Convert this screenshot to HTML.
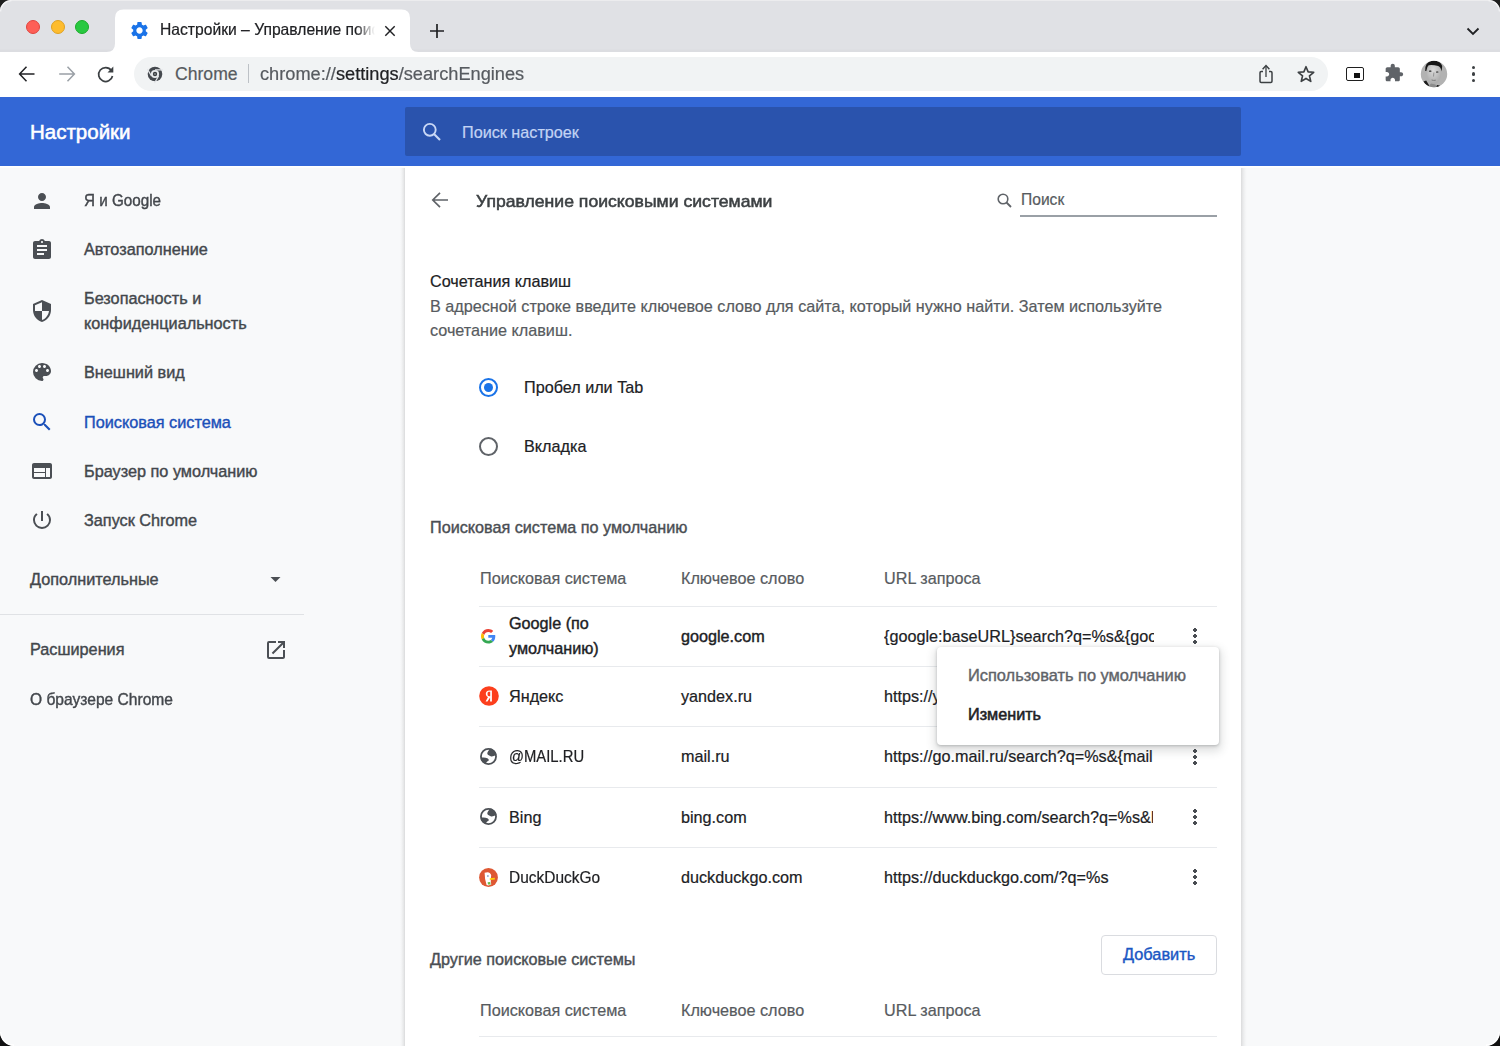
<!DOCTYPE html>
<html><head><meta charset="utf-8">
<style>
*{box-sizing:border-box;margin:0;padding:0}
html,body{width:1500px;height:1046px;overflow:hidden;background:#f8f9fa;font-family:"Liberation Sans",sans-serif;position:relative}
.a{position:absolute;white-space:nowrap}
.t{position:absolute;white-space:nowrap;line-height:20px;height:20px;-webkit-text-stroke:0.2px currentColor}
.a{-webkit-text-stroke:0.2px currentColor}
.med{-webkit-text-stroke:0.4px currentColor}
svg{position:absolute;overflow:visible}
#tabstrip{position:absolute;left:0;top:0;width:1500px;height:52px;background:linear-gradient(180deg,#e0e1e5 0,#e0e1e5 49px,#dcdde1 50px,#dcdde1 52px)}
#toolbar{position:absolute;left:0;top:52px;width:1500px;height:45px;background:#fff}
#omni{position:absolute;left:133.5px;top:56.7px;width:1194px;height:34px;border-radius:17px;background:#f1f3f4}
#header{position:absolute;left:0;top:97px;width:1500px;height:69px;background:#3367d6}
#hsearch{position:absolute;left:405px;top:107px;width:836px;height:49px;background:#2a53ad;border-radius:2px}
#side{position:absolute;left:0;top:166px;width:405px;height:880px;background:#f8f9fa}
#card{position:absolute;left:405px;top:166px;width:836px;height:880px;background:#fff;box-shadow:none}
.side{font-size:16.25px;color:#43474c}
.p{color:#202124}
.s{color:#575b60}
.dots{position:absolute;width:4px;height:16px;background:radial-gradient(circle at 2px 2px,#484c51 1.7px,transparent 2.1px) 0 0/4px 6px repeat-y}
.hr{position:absolute;height:1px;background:#e8eaed}
</style></head><body>
<div id="tabstrip"></div>
<div class="a" style="left:0;top:0;width:1500px;height:1px;background:#ececee"></div>
<svg width="14" height="14" style="left:0;top:0"><path d="M0 0H11A11 11 0 0 0 0 11Z" fill="#1e1e1e"/><path d="M0.6 11.6A11 11 0 0 1 11.6 0.6" stroke="#f2f2f4" stroke-width="1.3" fill="none"/></svg>
<svg width="14" height="14" style="left:1486px;top:0"><path d="M14 0H3A11 11 0 0 1 14 11Z" fill="#1e1e1e"/><path d="M2.4 0.6A11 11 0 0 1 13.4 11.6" stroke="#f2f2f4" stroke-width="1.3" fill="none"/></svg>
<!-- traffic lights -->
<div class="a" style="left:26px;top:19.5px;width:14px;height:14px;border-radius:50%;background:#fe5f57;border:0.5px solid #e0443e"></div>
<div class="a" style="left:51px;top:19.5px;width:14px;height:14px;border-radius:50%;background:#febc2e;border:0.5px solid #dea123"></div>
<div class="a" style="left:75px;top:19.5px;width:14px;height:14px;border-radius:50%;background:#28c840;border:0.5px solid #1aab29"></div>
<!-- tab -->
<svg width="1500" height="52" style="left:0;top:0">
  <path d="M106.5 52 Q115 52 115 43.5 L115 18 Q115 9.5 123.5 9.5 L401.5 9.5 Q410 9.5 410 18 L410 43.5 Q410 52 418.5 52 Z" fill="#fff"/>
</svg>
<div id="toolbar"></div>
<svg width="21" height="21" style="left:129px;top:20px" viewBox="0 0 24 24"><path fill="#1a73e8" d="M19.14 12.94c.04-.3.06-.61.06-.94 0-.32-.02-.64-.07-.94l2.03-1.58a.49.49 0 0 0 .12-.61l-1.92-3.32a.488.488 0 0 0-.59-.22l-2.39.96c-.5-.38-1.03-.7-1.62-.94l-.36-2.54a.484.484 0 0 0-.48-.41h-3.84c-.24 0-.43.17-.47.41l-.36 2.54c-.59.24-1.13.57-1.62.94l-2.39-.96c-.22-.08-.47 0-.59.22L2.74 8.87c-.12.21-.08.47.12.61l2.03 1.58c-.05.3-.09.63-.09.94s.02.64.07.94l-2.03 1.58a.49.49 0 0 0-.12.61l1.92 3.32c.12.22.37.29.59.22l2.39-.96c.5.38 1.03.7 1.62.94l.36 2.54c.05.24.24.41.48.41h3.84c.24 0 .44-.17.47-.41l.36-2.54c.59-.24 1.13-.56 1.62-.94l2.39.96c.22.08.47 0 .59-.22l1.92-3.32c.12-.22.07-.47-.12-.61l-2.01-1.58zM12 15.6c-1.98 0-3.6-1.62-3.6-3.6s1.62-3.6 3.6-3.6 3.6 1.62 3.6 3.6-1.62 3.6-3.6 3.6z"/></svg>
<div class="t p" style="left:160px;top:20.2px;font-size:15.66px;width:216px;overflow:hidden;-webkit-mask-image:linear-gradient(90deg,#000 196px,transparent 215px)">Настройки – Управление поисковыми</div>
<svg width="12" height="12" style="left:384px;top:25px"><path d="M1.3 1.3L10.7 10.7M10.7 1.3L1.3 10.7" stroke="#202124" stroke-width="1.45"/></svg>
<svg width="16" height="16" style="left:429px;top:23px"><path d="M8 1V15M1 8H15" stroke="#202124" stroke-width="1.7"/></svg>
<svg width="14" height="10" style="left:1466px;top:26px"><path d="M1.5 2.5L7 8L12.5 2.5" stroke="#202124" stroke-width="1.8" fill="none"/></svg>
<!-- toolbar -->
<svg width="18" height="18" style="left:18px;top:64.5px"><path d="M16.5 9H2.2M8.5 1.8L1.6 9L8.5 16.2" stroke="#202124" stroke-width="1.5" fill="none"/></svg>
<svg width="18" height="18" style="left:57.5px;top:64.5px"><path d="M1.2 9H15.8M9.5 1.8L16.4 9L9.5 16.2" stroke="#9aa0a6" stroke-width="1.5" fill="none"/></svg>
<svg width="18" height="18" style="left:97px;top:64.5px"><path d="M14.3 5.4A7 7 0 1 0 15.5 11" stroke="#3c4043" stroke-width="1.7" fill="none"/><path d="M16.3 1.6V7.4H10.5Z" fill="#3c4043"/></svg>
<div id="omni"></div>
<svg width="16" height="16" style="left:147px;top:65.8px" viewBox="0 0 16 16"><circle cx="8" cy="8" r="7.3" fill="#45494e"/><circle cx="8" cy="8" r="4.1" fill="#e8eaed"/><circle cx="8" cy="8" r="2.2" fill="#3c4043"/><circle cx="8" cy="8" r="1.1" fill="#7a7e83"/><path d="M8 3.9H15.8M11.55 10.05L7.55 17M4.45 10.05L0.45 3.1" stroke="#e3e5e8" stroke-width="1.25"/></svg>
<div class="t s" style="left:175px;top:64px;font-size:17.6px">Chrome</div>
<div class="a" style="left:248px;top:64px;width:1px;height:19px;background:#bdc1c6"></div>
<div class="t s" style="left:260px;top:64px;font-size:17.6px;transform-origin:0 0;transform:scaleX(1.035)">chrome://<span style="color:#202124">settings</span>/searchEngines</div>
<svg width="16" height="20" style="left:1258px;top:64px"><path d="M5 7.5H3.2Q2 7.5 2 8.7V17.3Q2 18.5 3.2 18.5H12.8Q14 18.5 14 17.3V8.7Q14 7.5 12.8 7.5H11" stroke="#3c4043" stroke-width="1.5" fill="none"/><path d="M8 13V2" stroke="#3c4043" stroke-width="1.3"/><path d="M4.6 5.2L8 1.6L11.4 5.2" stroke="#3c4043" stroke-width="1.5" fill="none"/></svg>
<svg width="22" height="22" style="left:1294.9px;top:62.5px"><polygon points="11.00,3.70 13.14,8.85 18.70,9.30 14.47,12.93 15.76,18.35 11.00,15.45 6.24,18.35 7.53,12.93 3.30,9.30 8.86,8.85" fill="none" stroke="#3c4043" stroke-width="1.65" stroke-linejoin="round"/></svg>
<div class="a" style="left:1346px;top:66.5px;width:18px;height:14.5px;border:1.9px solid #1f1f1f;border-radius:2px"></div>
<div class="a" style="left:1354px;top:73px;width:6px;height:5px;background:#111"></div>
<svg width="20" height="20" style="left:1384px;top:63px" viewBox="0 0 24 24"><path fill="#5f6368" d="M20.5 11H19V7c0-1.1-.9-2-2-2h-4V3.5C13 2.12 11.88 1 10.5 1S8 2.12 8 3.5V5H4c-1.1 0-1.99.9-1.99 2v3.8H3.5c1.49 0 2.7 1.21 2.7 2.7s-1.21 2.7-2.7 2.7H2V20c0 1.1.9 2 2 2h3.8v-1.5c0-1.49 1.21-2.7 2.7-2.7 1.49 0 2.7 1.21 2.7 2.7V22H17c1.1 0 2-.9 2-2v-4h1.5c1.38 0 2.5-1.12 2.5-2.5S21.88 11 20.5 11z"/></svg>
<svg width="28" height="28" style="left:1419.5px;top:59.6px" viewBox="0 0 28 28"><defs><clipPath id="av"><circle cx="14" cy="14" r="13.2"/></clipPath><radialGradient id="fc" cx="0.45" cy="0.35" r="0.65"><stop offset="0" stop-color="#dadada"/><stop offset="1" stop-color="#ababab"/></radialGradient></defs><g clip-path="url(#av)"><rect width="28" height="28" fill="#b2b2b2"/><ellipse cx="14" cy="13.5" rx="7" ry="10.5" fill="url(#fc)"/><path d="M5.2 11Q4.6 2 12.5 0.8Q20.5 0.5 22.2 6L21.6 11.5Q20.8 6.8 18.2 6Q13 4.6 8.6 5.2Q6.6 6.8 6.3 11Z" fill="#161616"/><ellipse cx="10.2" cy="11.2" rx="1.3" ry="0.85" fill="#505050"/><ellipse cx="17.2" cy="12" rx="1.3" ry="0.85" fill="#505050"/><path d="M13.9 12.5L13.5 16.5" stroke="#8a8a8a" stroke-width="0.9"/><path d="M11.6 20Q13.6 20.8 15.8 20.2" stroke="#7d7d7d" stroke-width="1" fill="none"/><path d="M3.5 21.5L6.2 20.5L9.5 26L7 28Z" fill="#1c1c1c"/><path d="M15.8 28L17 25L20 25.8L19 28Z" fill="#111"/><path d="M8.5 26L11 23.5L15.5 24.5L17 28H9Z" fill="#8c8c8c"/></g></svg>
<div class="a" style="left:1471.5px;top:66px;width:3.2px;height:3.2px;border-radius:50%;background:#3c4043"></div>
<div class="a" style="left:1471.5px;top:72.4px;width:3.2px;height:3.2px;border-radius:50%;background:#3c4043"></div>
<div class="a" style="left:1471.5px;top:78.6px;width:3.2px;height:3.2px;border-radius:50%;background:#3c4043"></div>
<!-- header -->
<div id="header"></div>
<div class="t" style="left:30px;top:121px;font-size:20.5px;line-height:22px;height:22px;color:#fff;-webkit-text-stroke:0.55px #fff">Настройки</div>
<div id="hsearch"></div>
<svg width="20" height="20" style="left:421.5px;top:121.5px"><circle cx="7.8" cy="7.8" r="5.9" stroke="#c9d8f6" stroke-width="1.9" fill="none"/><path d="M12 12L18 18" stroke="#c9d8f6" stroke-width="2.1"/></svg>
<div class="t" style="left:462px;top:122px;font-size:16.2px;color:#c3d3f4">Поиск настроек</div>
<!-- sidebar -->
<div id="side"></div>
<div id="card"></div>
<div class="a" style="left:399.5px;top:168px;width:5.5px;height:878px;background:linear-gradient(270deg,rgba(0,0,0,.12),rgba(0,0,0,.06) 35%,rgba(0,0,0,.015) 75%,rgba(0,0,0,0))"></div>
<div class="a" style="left:1241px;top:168px;width:5.5px;height:878px;background:linear-gradient(90deg,rgba(0,0,0,.12),rgba(0,0,0,.06) 35%,rgba(0,0,0,.015) 75%,rgba(0,0,0,0))"></div>


<div class="a" style="left:0;top:166px;width:1500px;height:1px;background:#fff"></div><div class="a" style="left:0;top:167px;width:1500px;height:1px;background:rgba(255,255,255,.6)"></div>
<!-- card content -->
<svg width="18" height="18" style="left:430.5px;top:191px"><path d="M17 9H2.5M9 1.8L1.8 9L9 16.2" stroke="#5f6368" stroke-width="1.7" fill="none"/></svg>
<div class="t" style="left:475.5px;top:190.5px;font-size:16.4px;color:#3c4043;-webkit-text-stroke:0.5px #3c4043;transform-origin:0 0;transform:scaleX(1.075)">Управление поисковыми системами</div>
<svg width="18" height="18" style="left:996px;top:192px"><circle cx="7" cy="7" r="4.8" stroke="#5f6368" stroke-width="1.6" fill="none"/><path d="M10.5 10.5L15 15" stroke="#5f6368" stroke-width="1.8"/></svg>
<div class="t s" style="left:1021px;top:190px;font-size:15.6px">Поиск</div>
<div class="hr" style="left:1020px;top:214.5px;width:197px;height:2px;background:#9aa0a6"></div>
<div class="t p" style="left:430px;top:271px;font-size:16.2px">Сочетания клавиш</div>
<div class="t s" style="left:430px;top:295.5px;font-size:16.2px">В адресной строке введите ключевое слово для сайта, который нужно найти. Затем используйте</div>
<div class="t s" style="left:430px;top:320px;font-size:16.2px">сочетание клавиш.</div>
<div class="a" style="left:479px;top:378px;width:19px;height:19px;border-radius:50%;border:2.2px solid #1a73e8"></div>
<div class="a" style="left:484px;top:383px;width:9px;height:9px;border-radius:50%;background:#1a73e8"></div>
<div class="t p" style="left:524px;top:377px;font-size:16.2px">Пробел или Tab</div>
<div class="a" style="left:479px;top:437px;width:19px;height:19px;border-radius:50%;border:2.2px solid #5f6368"></div>
<div class="t p" style="left:524px;top:436px;font-size:16.2px">Вкладка</div>
<div class="t med" style="left:430px;top:517px;font-size:16.2px;color:#4a4e53">Поисковая система по умолчанию</div>
<div class="t s" style="left:480px;top:568px;font-size:16.2px">Поисковая система</div>
<div class="t s" style="left:681px;top:568px;font-size:16.2px">Ключевое слово</div>
<div class="t s" style="left:884px;top:568px;font-size:16.2px">URL запроса</div>
<div class="hr" style="left:479px;top:605.5px;width:738px"></div>
<!-- google row -->
<svg width="14.6" height="14.6" style="left:481px;top:628.8px" viewBox="0 0 48 48"><path fill="#EA4335" d="M24 9.5c3.54 0 6.71 1.22 9.21 3.6l6.85-6.85C35.9 2.38 30.47 0 24 0 14.62 0 6.51 5.38 2.56 13.22l7.98 6.19C12.43 13.72 17.74 9.5 24 9.5z"/><path fill="#4285F4" d="M46.98 24.55c0-1.57-.15-3.09-.38-4.55H24v9.02h12.94c-.58 2.96-2.26 5.48-4.78 7.18l7.73 6c4.51-4.18 7.09-10.36 7.09-17.65z"/><path fill="#FBBC05" d="M10.53 28.59c-.48-1.45-.76-2.99-.76-4.59s.27-3.14.76-4.59l-7.98-6.19C.92 16.46 0 20.12 0 24c0 3.88.92 7.54 2.56 10.78l7.97-6.19z"/><path fill="#34A853" d="M24 48c6.48 0 11.93-2.13 15.89-5.81l-7.73-6c-2.15 1.45-4.92 2.3-8.16 2.3-6.26 0-11.57-4.22-13.47-9.91l-7.98 6.19C6.51 42.62 14.62 48 24 48z"/></svg>
<div class="t p med" style="left:509px;top:613px;font-size:16.2px">Google (по</div>
<div class="t p med" style="left:509px;top:637.7px;font-size:16.2px">умолчанию)</div>
<div class="t p med" style="left:681px;top:625.5px;font-size:16.2px">google.com</div>
<div class="a" style="left:884px;top:625.5px;width:270px;overflow:hidden;line-height:20px;font-size:16.2px;color:#202124">{google:baseURL}search?q=%s&amp;{google:RLZ}</div>
<div class="hr" style="left:479px;top:665.5px;width:738px"></div>
<!-- yandex -->
<svg width="20" height="20" style="left:478.5px;top:686px" viewBox="0 0 20 20"><circle cx="10" cy="10" r="9.8" fill="#fc3f1d"/><path d="M11.2 15.5H12.9V4.5H10.5C8 4.5 6.8 5.8 6.8 7.7C6.8 9.3 7.6 10.2 9 11.1L6.6 15.5H8.5L11.1 11.6V15.5ZM11.2 10.3H10.3C9 10.3 8.5 9.6 8.5 7.8C8.5 6.3 9.1 5.8 10.3 5.8H11.2Z" fill="#fff"/></svg>
<div class="t p" style="left:509px;top:686px;font-size:16.2px">Яндекс</div>
<div class="t p" style="left:681px;top:686px;font-size:16.2px">yandex.ru</div>
<div class="t p" style="left:884px;top:686px;font-size:16.2px">https://yandex.ru/search/</div>
<div class="hr" style="left:479px;top:726px;width:738px"></div>
<!-- mail -->
<svg width="17" height="17" style="left:480px;top:748px" viewBox="0 0 17 17"><circle cx="8.5" cy="8.5" r="7.55" fill="#fff" stroke="#4d5156" stroke-width="1.8"/><g fill="#4d5156"><path d="M9.8 0.5C8.6 2.8 7 4.6 7.3 5.8C7.7 6.9 8.6 7.3 9.6 7.7C10.6 8.1 11 8.7 11.7 8.6C12.6 8.4 13.2 8.1 13.8 8C14.6 7.8 15.4 7.4 16.6 7.3C16.5 4 13.5 1 9.8 0.5Z"/><path d="M0.5 9.4L3.5 9.5C5 9.6 6.3 9.8 7.2 10.3C8 10.8 8.8 11.2 8.8 11.9C8.8 12.6 7.8 13 7.2 13.5C6.6 14 6.1 14.6 5.8 16.1C3 15.3 0.9 12.6 0.5 9.4Z"/></g></svg>
<div class="t p" style="left:509px;top:746px;font-size:16.2px;transform-origin:0 0;transform:scaleX(0.915)">@MAIL.RU</div>
<div class="t p" style="left:681px;top:746px;font-size:16.2px">mail.ru</div>
<div class="a" style="left:884px;top:746px;width:269px;overflow:hidden;line-height:20px;font-size:16.2px;color:#202124">https://go.mail.ru/search?q=%s&amp;{mail:RLZ}</div>
<div class="hr" style="left:479px;top:786.5px;width:738px"></div>
<!-- bing -->
<svg width="17" height="17" style="left:480px;top:808px" viewBox="0 0 17 17"><circle cx="8.5" cy="8.5" r="7.55" fill="#fff" stroke="#4d5156" stroke-width="1.8"/><g fill="#4d5156"><path d="M9.8 0.5C8.6 2.8 7 4.6 7.3 5.8C7.7 6.9 8.6 7.3 9.6 7.7C10.6 8.1 11 8.7 11.7 8.6C12.6 8.4 13.2 8.1 13.8 8C14.6 7.8 15.4 7.4 16.6 7.3C16.5 4 13.5 1 9.8 0.5Z"/><path d="M0.5 9.4L3.5 9.5C5 9.6 6.3 9.8 7.2 10.3C8 10.8 8.8 11.2 8.8 11.9C8.8 12.6 7.8 13 7.2 13.5C6.6 14 6.1 14.6 5.8 16.1C3 15.3 0.9 12.6 0.5 9.4Z"/></g></svg>
<div class="t p" style="left:509px;top:806.5px;font-size:16.2px">Bing</div>
<div class="t p" style="left:681px;top:806.5px;font-size:16.2px">bing.com</div>
<div class="a" style="left:884px;top:806.5px;width:269px;overflow:hidden;line-height:20px;font-size:16.2px;color:#202124">https://www.bing.com/search?q=%s&amp;PC=U316</div>
<div class="hr" style="left:479px;top:847px;width:738px"></div>
<!-- ddg -->
<svg width="19" height="19" style="left:478.8px;top:868px" viewBox="0 0 19 19"><circle cx="9.5" cy="9.5" r="9.4" fill="#de5833"/><path d="M5.6 4.8Q10.8 2.8 12.2 7.2L11.8 10.8Q11.6 13.8 12.3 16.6Q9.6 18 7.6 17Q5.6 11.5 5.6 4.8Z" fill="#fff"/><circle cx="8.9" cy="8" r="0.9" fill="#8fa6cf"/><path d="M10.7 10.3L15.8 9.7L15.9 11.6L10.8 12.1Z" fill="#fdd20a"/><path d="M8.6 14.3L11.2 14L11.6 16.4L9 16.6Z" fill="#67bd47"/></svg>
<div class="t p" style="left:509px;top:867px;font-size:16.2px;transform-origin:0 0;transform:scaleX(0.955)">DuckDuckGo</div>
<div class="t p" style="left:681px;top:867px;font-size:16.2px">duckduckgo.com</div>
<div class="t p" style="left:884px;top:867px;font-size:16.2px">https://duckduckgo.com/?q=%s</div>
<!-- dots -->
<div class="dots" style="left:1192.5px;top:628px"></div>
<div class="dots" style="left:1192.5px;top:748.5px"></div>
<div class="dots" style="left:1192.5px;top:809px"></div>
<div class="dots" style="left:1192.5px;top:869px"></div>
<!-- popup -->
<div class="a" style="left:937px;top:646.5px;width:281.5px;height:98px;background:#fff;border-radius:4px;box-shadow:0 1px 3px rgba(60,64,67,.3),0 4px 8px 3px rgba(60,64,67,.15)"></div>
<div class="t med" style="left:968px;top:664.5px;font-size:16.4px;color:#5f6368">Использовать по умолчанию</div>
<div class="t p" style="left:968px;top:704px;font-size:16.2px;-webkit-text-stroke:0.55px #202124">Изменить</div>
<!-- others -->
<div class="t med" style="left:430px;top:949px;font-size:16.2px;color:#4a4e53">Другие поисковые системы</div>
<div class="a" style="left:1101px;top:935px;width:116px;height:39.5px;border:1px solid #dadce0;border-radius:4px;background:#fff"></div>
<div class="t med" style="left:1123px;top:943.8px;font-size:16.35px;color:#1a57c4">Добавить</div>
<div class="t s" style="left:480px;top:999.8px;font-size:16.2px">Поисковая система</div>
<div class="t s" style="left:681px;top:999.8px;font-size:16.2px">Ключевое слово</div>
<div class="t s" style="left:884px;top:999.8px;font-size:16.2px">URL запроса</div>
<div class="hr" style="left:479px;top:1036px;width:738px"></div>

<!-- sidebar items -->
<svg width="24" height="24" style="left:30px;top:188.5px" viewBox="0 0 24 24"><path fill="#4b4f54" d="M12 12c2.21 0 4-1.79 4-4s-1.79-4-4-4-4 1.79-4 4 1.79 4 4 4zm0 2c-2.67 0-8 1.34-8 4v2h16v-2c0-2.66-5.33-4-8-4z"/></svg>
<div class="t side med" style="left:84px;top:190.3px;font-size:16.2px;transform-origin:0 0;transform:scaleX(0.94)">Я и Google</div>
<svg width="24" height="24" style="left:30px;top:238px" viewBox="0 0 24 24"><path fill="#4b4f54" d="M19 3h-4.18C14.4 1.84 13.3 1 12 1c-1.3 0-2.4.84-2.82 2H5c-1.1 0-2 .9-2 2v14c0 1.1.9 2 2 2h14c1.1 0 2-.9 2-2V5c0-1.1-.9-2-2-2zm-7 0c.55 0 1 .45 1 1s-.45 1-1 1-1-.45-1-1 .45-1 1-1zm2 14H7v-2h7v2zm3-4H7v-2h10v2zm0-4H7V7h10v2z"/></svg>
<div class="t side med" style="left:84px;top:238.7px">Автозаполнение</div>
<svg width="24" height="24" style="left:30px;top:299px" viewBox="0 0 24 24"><path fill="#4b4f54" d="M12 1L3 5v6c0 5.55 3.84 10.74 9 12 5.16-1.26 9-6.45 9-12V5l-9-4zm0 10.99h7c-.53 4.12-3.28 7.79-7 8.94V12H5V6.3l7-3.11v8.8z"/></svg>
<div class="t side med" style="left:84px;top:288px">Безопасность и</div>
<div class="t side med" style="left:84px;top:312.7px">конфиденциальность</div>
<svg width="24" height="24" style="left:30px;top:360px" viewBox="0 0 24 24"><path fill="#4b4f54" d="M12 3a9 9 0 0 0 0 18c.83 0 1.5-.67 1.5-1.5 0-.39-.15-.74-.39-1.01-.23-.26-.38-.61-.38-.99 0-.83.67-1.5 1.5-1.5H16c2.76 0 5-2.24 5-5 0-4.42-4.03-8-9-8zm-5.5 9c-.83 0-1.5-.67-1.5-1.5S5.67 9 6.5 9 8 9.67 8 10.5 7.33 12 6.5 12zm3-4C8.67 8 8 7.33 8 6.5S8.67 5 9.5 5s1.5.67 1.5 1.5S10.33 8 9.5 8zm5 0c-.83 0-1.5-.67-1.5-1.5S13.67 5 14.5 5s1.5.67 1.5 1.5S15.33 8 14.5 8zm3 4c-.83 0-1.5-.67-1.5-1.5S16.67 9 17.5 9s1.5.67 1.5 1.5-.67 1.5-1.5 1.5z"/></svg>
<div class="t side med" style="left:84px;top:362px">Внешний вид</div>
<svg width="24" height="24" style="left:29.7px;top:410px" viewBox="0 0 24 24"><path fill="#1b50b9" d="M15.5 14h-.79l-.28-.27A6.47 6.47 0 0 0 16 9.5 6.5 6.5 0 1 0 9.5 16c1.61 0 3.09-.59 4.23-1.57l.27.28v.79l5 4.99L20.49 19l-4.99-5zm-6 0C7.01 14 5 11.99 5 9.5S7.01 5 9.5 5 14 7.01 14 9.5 11.99 14 9.5 14z"/></svg>
<div class="t side med" style="left:84px;top:412px;color:#1b50b9">Поисковая система</div>
<svg width="24" height="24" style="left:29.9px;top:459px" viewBox="0 0 24 24"><path fill="#4b4f54" d="M20 4H4c-1.1 0-1.99.9-1.99 2L2 18c0 1.1.9 2 2 2h16c1.1 0 2-.9 2-2V6c0-1.1-.9-2-2-2zm-5 14H4v-4h11v4zm0-5H4V9h11v4zm5 5h-4V9h4v9z"/></svg>
<div class="t side med" style="left:84px;top:460.5px">Браузер по умолчанию</div>
<svg width="24" height="24" style="left:30px;top:508px" viewBox="0 0 24 24"><path fill="#4b4f54" d="M13 3h-2v10h2V3zm4.83 2.17l-1.42 1.42A6.92 6.92 0 0 1 19 12c0 3.87-3.13 7-7 7A6.995 6.995 0 0 1 7.58 6.58L6.17 5.17A8.932 8.932 0 0 0 3 12a9 9 0 0 0 18 0c0-2.74-1.23-5.18-3.17-6.83z"/></svg>
<div class="t side med" style="left:84px;top:510px">Запуск Chrome</div>
<div class="t side med" style="left:30px;top:569px">Дополнительные</div>
<svg width="12" height="8" style="left:270px;top:576px"><path d="M0.5 1H10.5L5.5 6Z" fill="#4b4f54"/></svg>
<div class="hr" style="left:0;top:614px;width:304px;background:#e0e2e5"></div>
<div class="t side med" style="left:30px;top:639px">Расширения</div>
<svg width="24" height="24" style="left:264px;top:638px" viewBox="0 0 24 24"><path fill="#4b4f54" d="M19 19H5V5h7V3H5a2 2 0 0 0-2 2v14a2 2 0 0 0 2 2h14c1.1 0 2-.9 2-2v-7h-2v7zM14 3v2h3.59l-9.83 9.83 1.41 1.41L19 6.41V10h2V3h-7z"/></svg>
<div class="t side med" style="left:30px;top:689.3px;font-size:16.2px;transform-origin:0 0;transform:scaleX(0.962)">О браузере Chrome</div>


<svg width="16" height="16" style="left:0;top:1030px"><path d="M0 16H14A14 14 0 0 1 0 2Z" fill="#111"/><path d="M0.7 2A14 14 0 0 0 14 15.3" stroke="#fff" stroke-width="1.4" fill="none"/></svg>
<svg width="16" height="16" style="left:1484px;top:1030px"><path d="M16 16H2A14 14 0 0 0 16 2Z" fill="#111"/><path d="M15.3 2A14 14 0 0 1 2 15.3" stroke="#fff" stroke-width="1.4" fill="none"/></svg>
</body></html>
